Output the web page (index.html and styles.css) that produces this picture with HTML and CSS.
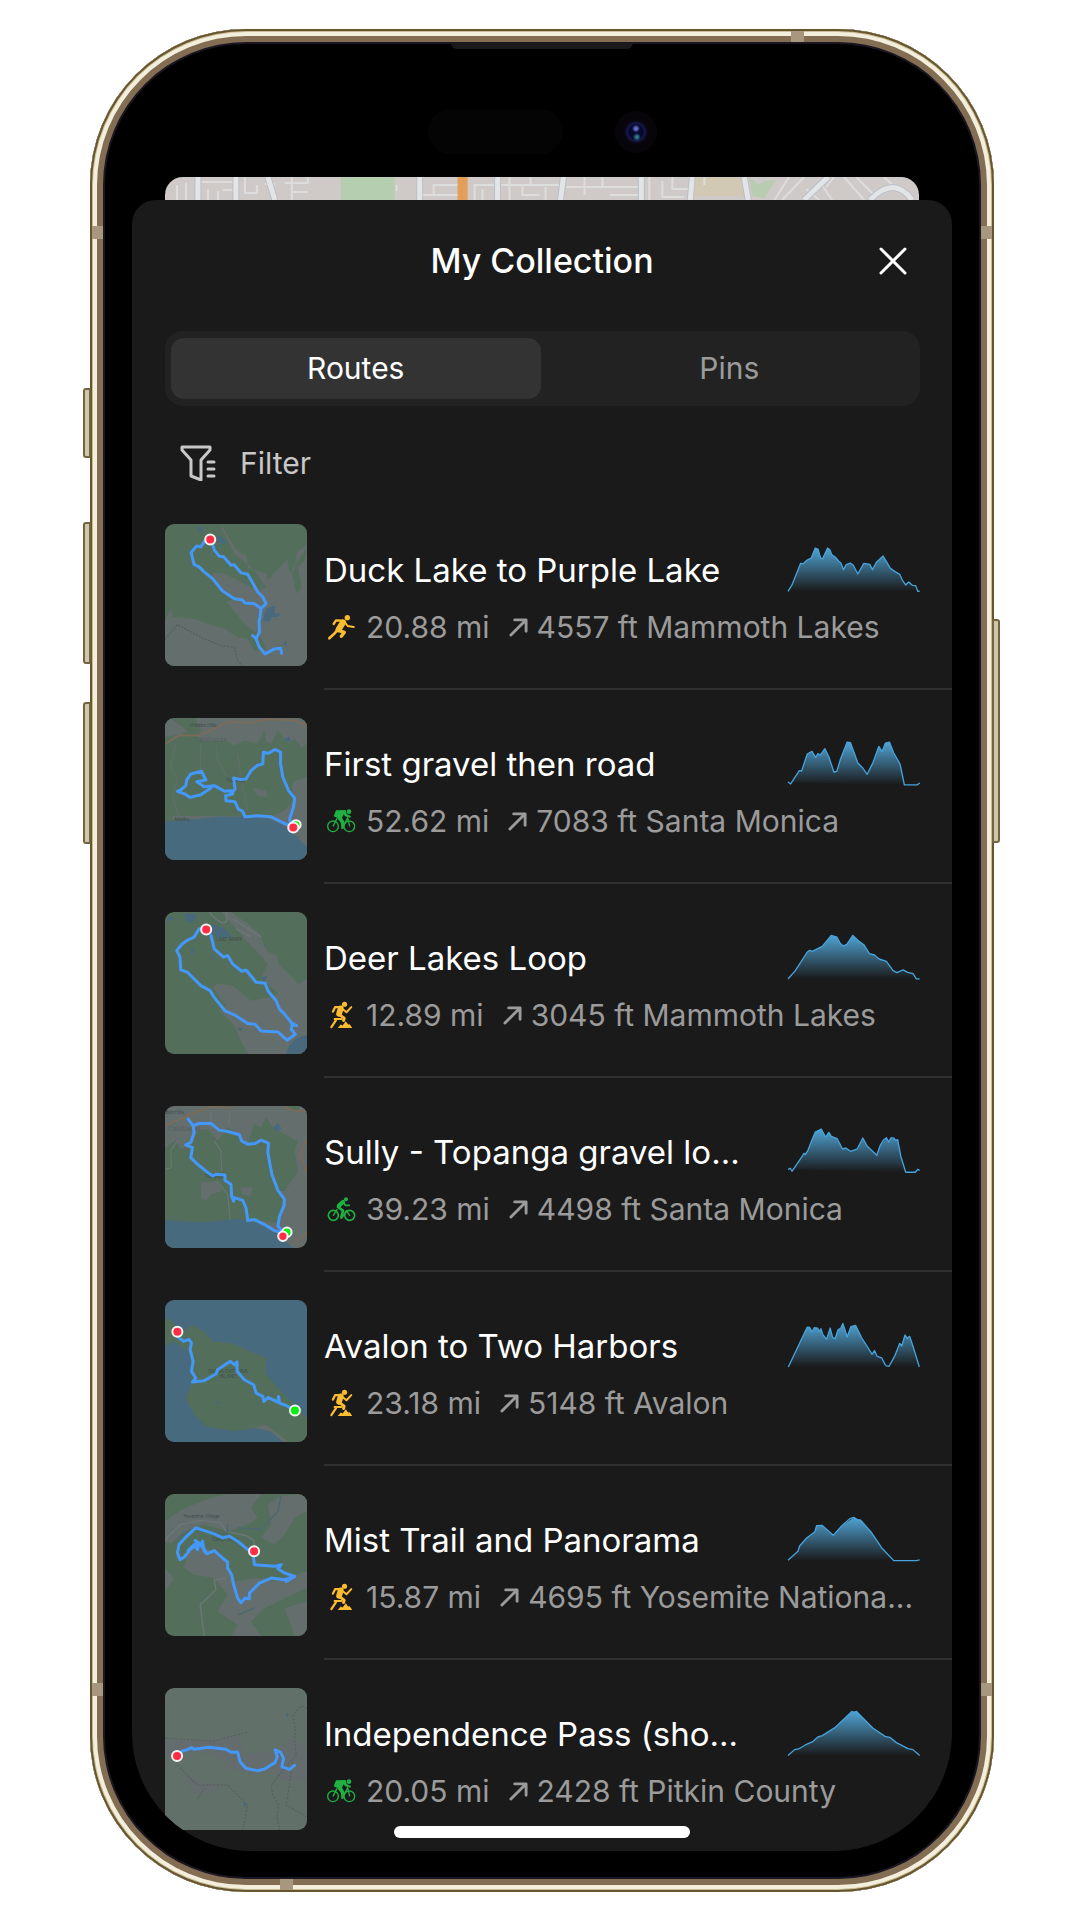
FILE: index.html
```html
<!DOCTYPE html>
<html lang="en">
  <head>
    <meta charset="UTF-8" />
    <meta name="viewport" content="width=device-width, initial-scale=1.0" />
    <title>My Collection</title>
    <link rel="stylesheet" href="styles.css">
  </head>
  <body>

    <!-- shared icons -->
    <svg class="sprite" aria-hidden="true">
      <defs>
        <linearGradient id="fade" x1="0" y1="0" x2="0" y2="1">
          <stop offset="0" stop-color="#4fa3d4" />
          <stop offset="1" stop-color="#1a1a1a" />
        </linearGradient>
      </defs>

      <symbol id="run" viewBox="527 580 90 84">
        <circle cx="591" cy="594" r="8" fill="currentColor" />
        <g fill="none" stroke="currentColor" stroke-linecap="round" stroke-linejoin="round">
          <path d="M576 603L557 602L550 613" stroke-width="7" />
          <path d="M578 608L565 629" stroke-width="18" />
          <path d="M582 606L592 619L610 622" stroke-width="6" />
          <path d="M567 633L582 638L573 650" stroke-width="10" />
          <path d="M561 630L554 640L537 656" stroke-width="8" />
        </g>
      </symbol>

      <symbol id="trail" viewBox="527 303 90 87">
        <circle cx="583" cy="313" r="8" fill="currentColor" />
        <g fill="none" stroke="currentColor" stroke-linecap="round" stroke-linejoin="round">
          <path d="M570 322L554 322L547 336" stroke-width="7" />
          <path d="M571 326L566 343" stroke-width="18" />
          <path d="M575 326L589 338L604 322" stroke-width="6" />
          <path d="M568 346L582 356L580 364" stroke-width="9" />
          <path d="M552 359H574" stroke-width="6" />
          <path d="M556 363L542 384" stroke-width="7" />
        </g>
        <path d="M562 387L571 376L577 379L587 366L594 376L599 375L607 387Z" fill="currentColor" />
      </symbol>

      <symbol id="road-bike" viewBox="527 324 90 76">
        <circle cx="596" cy="334" r="7" fill="currentColor" />
        <path d="M557 330L586 329L589 341L602 347L600 352L584 348L580 342L575 352L583 366L579 386L573 386L572 369L560 352L550 348Z" fill="currentColor" />
        <g fill="none" stroke="currentColor" stroke-width="4">
          <circle cx="548" cy="378" r="16" />
          <circle cx="597" cy="378" r="16" />
          <path d="M548 378L560 354M576 384L592 352L598 378" />
        </g>
      </symbol>

      <symbol id="gravel-bike" viewBox="527 317 90 78">
        <circle cx="587" cy="327" r="6" fill="currentColor" />
        <g fill="none" stroke="currentColor" stroke-linecap="round" stroke-linejoin="round">
          <circle cx="549" cy="375" r="15" stroke-width="5" />
          <circle cx="598" cy="375" r="15" stroke-width="5" />
          <path d="M578 335L566 346" stroke-width="13" />
          <path d="M579 336L585 345H597" stroke-width="5" />
          <path d="M563 350L578 361L573 382" stroke-width="8" />
          <path d="M549 375L560 358M578 378L588 361L598 375" stroke-width="4" />
        </g>
      </symbol>

      <symbol id="up" viewBox="0 0 20 20">
        <path d="M2 18L17 3M6 2H18V14" fill="none" stroke="currentColor" stroke-width="3" stroke-linecap="round" stroke-linejoin="round" />
      </symbol>
    </svg>

    <div class="phone">
      <span class="key key-action"></span>
      <span class="key key-up"></span>
      <span class="key key-down"></span>
      <span class="key key-power"></span>
      <span class="band band-top"></span>
      <span class="band band-bottom"></span>
      <span class="band band-side band-left band-high"></span>
      <span class="band band-side band-left band-low"></span>
      <span class="band band-side band-right band-high"></span>
      <span class="band band-side band-right band-low"></span>
      <span class="speaker"></span>

      <div class="island">
        <span class="sensor"></span>
        <span class="camera"></span>
      </div>

      <div class="screen">
        <svg class="backdrop" viewBox="0 0 755 23" preserveAspectRatio="none" aria-hidden="true">
          <rect width="755" height="23" fill="#cfcac8" />
          <rect x="176" width="54" height="23" fill="#b5ceaf" />
          <path d="M530 0H578L581 19H530Z" fill="#d2c9b4" />
          <path d="M585 0L594 7L600 4L612 3L600 21L588 19Z" fill="#b8ccb2" />
          <g fill="none" stroke="#dedddd" stroke-width="2">
            <path d="M12 8V23M21 6V23M35 5H72M43 12V23M53 14V23M58 13H72M80 0V16H92V8M100 7H110M120 6H143V0M128 15H143M127 0V23M232 8V14M258 18H295M269 18V8H294M310 23V8H330M318 12V23M336 8H395M345 0V23M358 8V18H375M366 0V8M381 23V10M402 10H475M420 0V18M438 0V10M445 18H475M485 0V23M498 4V20H520M508 0V12H525M540 0V8M625 0L610 23M640 0L618 23M655 4L668 23M670 0L662 10M680 0L700 23M692 0L712 20M720 0L735 14M642 12L655 23" />
          </g>
          <g fill="none" stroke="#b9bfc9" stroke-width="7">
            <path d="M33 0V23M71 0V23M103 0L110 23M255 0V23M333 0V23M399 0L396 23M477 0V23M528 0L526 23M580 0L584 23M664 0L640 23M706 23Q730 -2 748 23" />
          </g>
          <g fill="none" stroke="#e3e4e5" stroke-width="5">
            <path d="M33 0V23M71 0V23M103 0L110 23M255 0V23M333 0V23M399 0L396 23M477 0V23M528 0L526 23M580 0L584 23M664 0L640 23M706 23Q730 -2 748 23" />
          </g>
          <rect x="293" width="10" height="23" fill="#e39e58" />
        </svg>

        <main class="sheet">
          <header class="sheet-header">
            <h1>My Collection</h1>
            <button type="button" class="close" aria-label="Close">
              <svg viewBox="0 0 28 28"><path d="M2 2L26 26M26 2L2 26" fill="none" stroke="#fff" stroke-width="3" stroke-linecap="round" /></svg>
            </button>
          </header>

          <div class="tabs" role="tablist">
            <button type="button" class="tab active" role="tab" aria-selected="true">Routes</button>
            <button type="button" class="tab" role="tab" aria-selected="false">Pins</button>
          </div>

          <button type="button" class="filter">
            <svg viewBox="0 0 36 36" fill="none" stroke="currentColor" stroke-width="3" stroke-linejoin="round" stroke-linecap="round">
              <path d="M2 2H30V5L21 15V35L11 31V15L2 5Z" />
              <path d="M28 17H34M28 24H34M28 31H34" />
            </svg>
            Filter
          </button>

          <ul class="routes">
            <li class="route">
              <svg class="thumb" viewBox="43 312 424 424" aria-hidden="true">
                <rect x="43" y="312" width="424" height="424" fill="#536f5b" />
                <path d="M210 312L232 350L262 395L285 405L292 445L345 460L350 480L395 430L408 420L415 455L430 450L436 400L467 370V736H43V600L60 565L66 590L130 595L170 610L220 625L262 650L290 655L310 690L345 690L330 650L280 610L228 545L250 535L200 500L180 470L190 458L220 460L300 500L330 510L345 500L300 440L250 400L225 350L212 330ZM360 550L395 535L390 560L365 570ZM420 450L436 520L450 500L440 440L460 420L467 380Z" fill="#636e6d" />
                <path d="M335 600L345 565L372 555L370 578L388 580L380 590L362 590L355 605ZM138 330L150 315L158 340ZM200 345L225 360L220 375L200 365ZM395 670L405 660V680Z" fill="#48697c" />
                <path d="M43 655L80 612L150 650L210 675L250 680L260 720L275 736" fill="none" stroke="#545d58" stroke-width="3" stroke-dasharray="6 4" />
                <path class="track" d="M178 358L160 365L150 380L137 378L121 397L130 433L145 440L160 455L185 475L215 512L250 535L272 538L282 548L310 550L330 564L327 590L324 600L325 635L315 655L325 680L342 700L370 685L388 683L391 698M316 655L305 645M330 564L345 550L335 530L320 515L290 462L270 458L250 434L240 435L218 410L205 408L190 390L185 370" />
                <circle class="end" cx="178" cy="358" r="15" />
              </svg>
              <div class="info">
                <div class="top">
                  <h2>Duck Lake to Purple Lake</h2>
                  <svg class="chart" viewBox="51 84 400 135" aria-hidden="true">
                    <path fill="url(#fade)" d="M54 217L66 198L92 133L100 134L110 124L124 117L136 87L144 90L152 117L158 119L173 87L180 92L186 107L196 114L206 126L213 132L221 152L229 137L241 132L250 138L264 165L282 133L300 136L308 152L320 130L340 111L350 128L362 148L376 158L390 166L398 184L408 198L417 189L428 199L438 200L446 217Z" />
                    <path class="line" d="M54 217L66 198L92 133L100 134L110 124L124 117L136 87L144 90L152 117L158 119L173 87L180 92L186 107L196 114L206 126L213 132L221 152L229 137L241 132L250 138L264 165L282 133L300 136L308 152L320 130L340 111L350 128L362 148L376 158L390 166L398 184L408 198L417 189L428 199L438 200L444 217H450" />
                  </svg>
                </div>
                <p class="meta">
                  <svg class="sport foot"><use href="#run" /></svg>
                  <span class="distance">20.88 mi</span>
                  <svg class="up"><use href="#up" /></svg>
                  <span>4557 ft Mammoth Lakes</span>
                </p>
              </div>
            </li>

            <li class="route">
              <svg class="thumb" viewBox="43 53 424 424" aria-hidden="true">
                <rect x="43" y="53" width="424" height="424" fill="#536f5b" />
                <path d="M135 53H467V130L450 140L430 115L410 130L380 90L360 130L345 125L340 90L320 130L280 120L250 135L225 120L160 125L140 110L150 90ZM430 240L467 230V477L400 400L270 350L340 355L400 330L435 290L420 260ZM305 262L345 270L350 290L320 285ZM70 345L270 345V355H60Z" fill="#636e6d" />
                <path d="M43 53H60L110 90L100 100L43 110Z" fill="#636e6d" />
                <path d="M43 363L130 355L200 348L275 347L350 352L400 375L440 410L467 440V477H43Z" fill="#486a7e" />
                <path d="M400 115L412 108L420 122L405 125Z" fill="#48697c" />
                <path d="M43 130L85 105L140 105L180 90L235 63L300 68L340 57L430 60L467 75" fill="none" stroke="#7d6b58" stroke-width="5" />
                <path d="M75 130L60 200L80 240L65 285L85 350M150 130L148 205M195 135L200 180L230 230M260 160L270 230L290 330" fill="none" stroke="#636e6d" stroke-width="3" />
                <text x="118" y="81" class="place">Hidden Hills</text>
                <text x="130" y="126" class="place faint">Calabasas</text>
                <text x="226" y="244" class="place">Topanga</text>
                <text x="72" y="361" class="place">Malibu</text>
                <path class="track" d="M426 375L404 370L360 348L320 345L282 348L275 332L262 325L252 303L225 300L224 285L245 280L240 270L222 272L190 255L160 258L138 243L165 238L152 212L120 220L108 238L105 255L90 268L80 272L102 280L118 290L150 282L180 262M240 280L252 265L248 232L268 237L285 235L300 210L318 195L335 190L337 155L352 158L372 147L388 155L388 190L395 230L412 270L430 292L427 318L415 355L420 375" />
                <circle class="start" cx="434" cy="372" r="14" />
                <circle class="end" cx="426" cy="380" r="15" />
              </svg>
              <div class="info">
                <div class="top">
                  <h2>First gravel then road</h2>
                  <svg class="chart" viewBox="51 666 400 135" aria-hidden="true">
                    <path fill="url(#fade)" d="M54 789L62 795L88 755L95 756L112 705L126 697L137 715L144 704L151 708L165 689L177 714L192 759L201 757L212 720L232 669L242 671L264 732L292 766L310 730L327 682L337 698L347 672L359 669L372 702L391 735L404 798Z" />
                    <path class="line" d="M54 789L62 795L88 755L95 756L112 705L126 697L137 715L144 704L151 708L165 689L177 714L192 759L201 757L212 720L232 669L242 671L264 732L278 746L292 766L310 730L327 682L337 698L347 672L359 669L372 702L391 735L404 798H442L450 792" />
                  </svg>
                </div>
                <p class="meta">
                  <svg class="sport bike"><use href="#road-bike" /></svg>
                  <span class="distance">52.62 mi</span>
                  <svg class="up"><use href="#up" /></svg>
                  <span>7083 ft Santa Monica</span>
                </p>
              </div>
            </li>

            <li class="route">
              <svg class="thumb" viewBox="43 35 424 424" aria-hidden="true">
                <rect x="43" y="35" width="424" height="424" fill="#536f5b" />
                <path d="M210 35H240L290 70L325 100L345 150L375 165L385 195L410 215L440 250L467 235V459H290L265 410L250 375L205 330L225 315L185 260L200 248L245 255L300 300L350 290L380 280L330 230L350 190L310 145L290 125L250 80Z" fill="#636e6d" />
                <path d="M405 459Q415 410 467 402V459ZM100 40L138 42L125 70L105 60ZM185 70L220 85L245 110L200 112L180 95ZM50 50H72L55 65ZM120 145L132 142L125 165ZM180 155L190 178L182 175ZM258 382L278 380L268 392ZM330 230L350 225L340 245Z" fill="#48697c" />
                <path d="M175 35Q195 60 215 68Q235 65 225 35M245 55L330 110M255 85L300 110" fill="none" stroke="#6d7779" stroke-width="4" />
                <text x="194" y="121" class="place">LAKE MARY</text>
                <path class="track" d="M166 87L145 85L130 110L112 118L95 130L78 150L88 170L90 208L110 215L150 255L178 270L190 290L222 330L250 342L290 368L312 370L330 390L380 393L408 418L432 400L420 385L422 372L436 374L420 365L400 340L385 325L375 300L350 270L342 248L315 245L285 208L272 212L245 190L230 165L218 170L190 145L180 105" />
                <circle class="end" cx="166" cy="87" r="15" />
              </svg>
              <div class="info">
                <div class="top">
                  <h2>Deer Lakes Loop</h2>
                  <svg class="chart" viewBox="51 1248 400 135" aria-hidden="true">
                    <path fill="url(#fade)" d="M54 1380L76 1355L112 1299L119 1294L127 1297L157 1282L184 1249L201 1254L211 1273L220 1281L231 1276L249 1249L266 1265L282 1277L299 1304L314 1308L328 1320L350 1327L370 1355L382 1361L400 1353L430 1364L440 1380Z" />
                    <path class="line" d="M54 1380L76 1355L112 1299L119 1294L127 1297L157 1282L184 1249L201 1254L211 1273L220 1281L231 1276L249 1249L266 1265L282 1277L299 1304L314 1308L328 1320L350 1327L370 1355L382 1361L400 1353L414 1360L430 1364L440 1380H450" />
                  </svg>
                </div>
                <p class="meta">
                  <svg class="sport foot"><use href="#trail" /></svg>
                  <span class="distance">12.89 mi</span>
                  <svg class="up"><use href="#up" /></svg>
                  <span>3045 ft Mammoth Lakes</span>
                </p>
              </div>
            </li>

            <li class="route">
              <svg class="thumb" viewBox="43 46 424 424" aria-hidden="true">
                <rect x="43" y="46" width="424" height="424" fill="#636e6d" />
                <path d="M43 170L75 150L90 175L125 160L140 120L170 115L200 150L230 110L260 130L290 160L310 100L330 110L345 80L365 110L400 130L440 150L430 180L440 240L400 300L380 395L290 385L230 388L160 395L43 390ZM410 46H450L440 60L415 55Z" fill="#536f5b" />
                <path d="M150 275L200 270L215 300L180 310L165 330L150 320ZM265 290L305 288L300 315L275 310ZM380 300L410 300L395 330Z" fill="#636e6d" />
                <path d="M43 387L160 393L260 383L320 395L370 420L425 470H43Z" fill="#486a7e" />
                <path d="M365 110L380 98L392 115L375 122Z" fill="#48697c" />
                <path d="M43 103L100 80L160 55L190 47L240 52M400 50L430 60L467 62M467 140L447 190L467 250M425 460L467 425" fill="none" stroke="#7d6b58" stroke-width="5" />
                <path d="M80 150L60 180L62 230L43 235M180 60V115M235 60V105M190 150L210 180L212 240M200 270L230 310L238 385" fill="none" stroke="#6d7779" stroke-width="3" />
                <text x="44" y="69" class="place">den Hills</text>
                <text x="52" y="122" class="place faint">Calabasas</text>
                <text x="162" y="262" class="place">Topanga</text>
                <path class="track" d="M395 425L370 418L340 400L310 385L290 388L285 350L275 328L245 318L248 330L242 315L240 280L222 268L222 252L195 250L185 255L165 240L138 218L120 200L125 170L105 162L120 155L130 125L127 105L112 85M127 105L145 98L180 98L205 118L230 122L265 132L272 150L290 160L312 158L330 148L352 157L350 185L362 250L380 298L400 325L398 345L385 375L380 405L400 425" />
                <circle class="start" cx="407" cy="423" r="14" />
                <circle class="end" cx="395" cy="435" r="14" />
              </svg>
              <div class="info">
                <div class="top">
                  <h2>Sully - Topanga gravel lo...</h2>
                  <svg class="chart" viewBox="51 60 400 135" aria-hidden="true">
                    <path fill="url(#fade)" d="M54 181L66 187L98 140L114 124L124 98L136 69L154 60L167 84L177 70L184 82L202 89L218 120L228 117L242 127L262 120L279 87L292 111L321 139L331 110L350 86L357 99L363 87L384 92L393 141L408 190Z" />
                    <path class="line" d="M54 181L61 178L66 187L98 140L102 133L106 137L114 124L124 98L136 69L154 60L167 84L177 70L184 82L202 89L218 120L228 117L242 127L262 120L279 87L292 111L321 139L331 110L342 92L350 86L357 99L363 87H372L378 94L384 92L393 141L408 190H437L444 181L450 184" />
                  </svg>
                </div>
                <p class="meta">
                  <svg class="sport bike"><use href="#gravel-bike" /></svg>
                  <span class="distance">39.23 mi</span>
                  <svg class="up"><use href="#up" /></svg>
                  <span>4498 ft Santa Monica</span>
                </p>
              </div>
            </li>

            <li class="route">
              <svg class="thumb" viewBox="43 57 424 424" aria-hidden="true">
                <rect x="43" y="57" width="424" height="424" fill="#486a7e" />
                <path d="M43 112L68 122L80 150L105 148L120 130L160 152L185 180L250 188L290 208L345 230L343 275L380 320L430 370L467 410V481H405L370 450L330 437L250 448L170 437L130 400L105 350L122 310L118 220L100 200L65 180L43 195Z" fill="#536f5b" />
                <path d="M305 437L345 430L380 455L410 481H395L360 450Z" fill="#636e6d" />
                <path d="M190 358L208 364L200 370Z" fill="#48697c" />
                <text x="172" y="274" class="place">SANTA CATALINA</text>
                <text x="206" y="289" class="place">ISLAND</text>
                <path class="track" d="M80 152L85 170L98 180L115 175L122 185L118 205L127 240L122 270L135 290L125 302L160 298L195 278L200 265L238 240L250 250L258 242L258 270L280 295L308 310L315 335L335 345L338 360L350 348L380 362L382 345L385 365L405 372L430 386" />
                <circle class="end" cx="80" cy="152" r="15" />
                <circle class="start" cx="431" cy="387" r="15" />
              </svg>
              <div class="info">
                <div class="top">
                  <h2>Avalon to Two Harbors</h2>
                  <svg class="chart" viewBox="51 641 400 135" aria-hidden="true">
                    <path fill="url(#fade)" d="M55 773L112 653L119 654L126 668L133 655L143 656L148 668L153 658L159 676L170 690L181 656L188 684L196 688L204 662L213 656L219 642L232 683L243 652L257 648L276 686L307 735L314 724L322 741L336 746L346 766L358 771L376 738L390 702L396 710L406 677L413 687L420 681L431 714L449 773Z" />
                    <path class="line" d="M55 773L112 653L119 654L126 668L133 655L143 656L148 668L153 658L159 676L170 690L181 656L188 684L196 688L204 662L213 656L219 642L232 683L243 652L257 648L276 686L307 735L314 724L322 741L336 746L346 766L350 770L358 771L376 738L390 702L396 710L406 677L413 687L420 681L431 714L449 773" />
                  </svg>
                </div>
                <p class="meta">
                  <svg class="sport foot"><use href="#trail" /></svg>
                  <span class="distance">23.18 mi</span>
                  <svg class="up"><use href="#up" /></svg>
                  <span>5148 ft Avalon</span>
                </p>
              </div>
            </li>

            <li class="route">
              <svg class="thumb" viewBox="43 39 424 424" aria-hidden="true">
                <rect x="43" y="39" width="424" height="424" fill="#536f5b" />
                <path d="M43 120L95 85L130 70L180 50L230 39H330L300 80L320 110L290 130L230 150L160 130L100 150L60 190L43 180ZM350 70L390 45L467 39V90L430 110L400 160L370 190L330 170L360 130ZM110 210L160 195L220 230L250 300L320 290L360 300L467 270V320L400 350L340 380L300 420L330 463H240L260 430L200 390L230 340L190 290L130 280L100 260ZM43 260L70 290L43 330ZM400 380L467 360V463H430Z" fill="#636e6d" />
                <path d="M43 175L90 130L150 118L210 125L225 150L290 165L310 180V210M160 463L148 370L195 325L190 295L225 290" fill="none" stroke="#6d7779" stroke-width="4" />
                <path d="M85 170L130 145L230 160V130M260 140L330 145L380 90L390 45M260 400L310 380" fill="none" stroke="#4c6873" stroke-width="4" />
                <text x="98" y="111" class="place">Yosemite Village</text>
                <text x="183" y="178" class="place">Camp Curry</text>
                <path class="track" d="M309 210L290 205L260 180L235 165L215 170L190 158L135 140L105 168L85 190L80 215L88 235L100 228L118 205L140 190L133 178L150 190L155 180L160 210L168 218L190 208L215 230L230 242L230 260L242 280L248 310L260 350L270 364L282 350L295 352L295 335L310 320L325 305L360 290L400 295L430 285L405 300M430 285L400 275L380 262L390 250L370 255L310 250L306 220M112 208L130 190L140 205L145 185L165 212" />
                <circle class="end" cx="309" cy="210" r="15" />
              </svg>
              <div class="info">
                <div class="top">
                  <h2>Mist Trail and Panorama</h2>
                  <svg class="chart" viewBox="51 1222 400 135" aria-hidden="true">
                    <path fill="url(#fade)" d="M54 1352L84 1325L89 1309L110 1285L135 1266L140 1248L157 1247L190 1277L216 1248L252 1223L272 1231L303 1266L336 1315L372 1353Z" />
                    <path class="line" d="M54 1352L84 1325L89 1309L110 1285L135 1266L140 1248L157 1247L190 1277L216 1248L240 1227L252 1223L262 1230L272 1231L303 1266L336 1315L372 1353H440L450 1351" />
                  </svg>
                </div>
                <p class="meta">
                  <svg class="sport foot"><use href="#trail" /></svg>
                  <span class="distance">15.87 mi</span>
                  <svg class="up"><use href="#up" /></svg>
                  <span>4695 ft Yosemite Nationa...</span>
                </p>
              </div>
            </li>

            <li class="route">
              <svg class="thumb" viewBox="283 50 424 424" aria-hidden="true">
                <rect x="283" y="50" width="424" height="424" fill="#62706a" />
                <path d="M283 200L430 208L500 185L520 250L600 240L660 200L707 230V330L640 325L600 300L540 305L480 290L440 250L330 235L283 260ZM340 310L400 335L460 340L430 360L370 365Z" fill="#646c6e" />
                <path d="M642 128L652 126L650 138ZM515 392L527 395L522 408Z" fill="#48697c" />
                <path d="M707 110L690 103L665 130L672 170L670 210L675 250L640 290L600 340L605 370L622 400L618 440L625 474M283 200L430 208L528 182M320 280L380 340L470 340L530 400L515 474M660 300L645 400L707 435M380 380L400 350" fill="none" stroke="#555f58" stroke-width="3" stroke-dasharray="6 5" />
                <path class="track" d="M319 253L335 238L350 234L362 228L370 233L415 227L465 233L480 242L500 242L507 270L525 290L560 297L580 292L612 272L618 255L612 235L628 242L637 260L632 285L655 293L670 281" />
                <circle class="end" cx="319" cy="253" r="15" />
              </svg>
              <div class="info">
                <div class="top">
                  <h2>Independence Pass (sho...</h2>
                  <svg class="chart" viewBox="681 182 400 135" aria-hidden="true">
                    <path fill="url(#fade)" d="M684 316L704 298L716 296L757 275L774 260L787 256L825 232L876 183L890 183L939 233L976 258L990 261L1010 277L1045 295L1060 298L1080 316Z" />
                    <path class="line" d="M684 316L704 298L716 296L736 284L757 275L774 260L787 256L825 232L876 183L882 187L890 183L939 233L976 258L990 261L1010 277L1045 295L1060 298L1080 316" />
                  </svg>
                </div>
                <p class="meta">
                  <svg class="sport bike"><use href="#road-bike" /></svg>
                  <span class="distance">20.05 mi</span>
                  <svg class="up"><use href="#up" /></svg>
                  <span>2428 ft Pitkin County</span>
                </p>
              </div>
            </li>
          </ul>

          <span class="home-bar"></span>
        </main>
      </div>
    </div>

  </body>
</html>
```
FILE: styles.css
```css
* {
  box-sizing: border-box;
}

body {
  margin: 0;
  padding: 29px 16px 28px 20px;
  background: #fff;
  color: #fff;
  font-family: Inter, "Liberation Sans", sans-serif;
}

button {
  border: none;
  background: none;
  color: inherit;
  font-family: inherit;
  cursor: pointer;
}

.sprite {
  position: absolute;
  width: 0;
  height: 0;
}

/* phone body */
.phone {
  position: relative;
  width: 100%;
  max-width: 904px;
  margin: 0 auto;
  padding: 0 42px 41px;
  border-radius: 156px;
  background: #000;
  box-shadow:
    inset 0 0 0 2px #66552f,
    inset 0 0 0 3px #c9bd94,
    inset 0 0 0 7px #f4efdc,
    inset 0 0 0 13px #836e54,
    inset 0 0 0 15px #1a1722;
}

.key {
  position: absolute;
  left: -7px;
  width: 8px;
  border: 2px solid #74633f;
  border-radius: 3px 0 0 3px;
  background: #cfc6ae;
}

.key-action {
  top: 359px;
  height: 70px;
}

.key-up {
  top: 493px;
  height: 142px;
}

.key-down {
  top: 673px;
  height: 142px;
}

.key-power {
  left: auto;
  right: -6px;
  top: 590px;
  height: 224px;
  border-radius: 0 3px 3px 0;
}

.band {
  position: absolute;
  width: 13px;
  height: 11px;
  background: #a8977f;
}

.band-top {
  top: 2px;
  right: 190px;
}

.band-bottom {
  bottom: 2px;
  left: 190px;
}

.band-side {
  width: 11px;
  height: 13px;
}

.band-left {
  left: 2px;
}

.band-right {
  right: 2px;
}

.band-high {
  top: 197px;
}

.band-low {
  bottom: 196px;
}

.speaker {
  position: absolute;
  top: 14px;
  left: 50%;
  width: 182px;
  height: 6px;
  margin-left: -91px;
  border-radius: 0 0 6px 6px;
  background: #1a1a1b;
}

.island {
  display: flex;
  justify-content: center;
  align-items: center;
  gap: 52px;
  height: 148px;
  padding-top: 57px;
}

.sensor {
  width: 135px;
  height: 45px;
  border-radius: 23px;
  background: #040404;
}

.camera {
  width: 42px;
  height: 42px;
  border-radius: 50%;
  background: radial-gradient(circle at 50% 42%, #6c70c8 0 1px, transparent 4px),
    radial-gradient(circle at 52% 62%, #2b8088 0 1px, transparent 4px),
    radial-gradient(circle, #070830 0 7px, #17194c 9px, #0e0e2c 10px, #08050a 12px);
}

/* screen */
.backdrop {
  display: block;
  width: calc(100% - 66px);
  height: 23px;
  margin: 0 auto;
  border-radius: 18px 18px 0 0;
}

.sheet {
  position: relative;
  overflow: hidden;
  border-radius: 24px 24px 118px 118px;
  background: #1a1a1a;
}

.sheet-header {
  display: grid;
  grid-template-columns: 1fr auto 1fr;
  align-items: center;
  padding: 39px 45px 48px;
}

.sheet-header h1 {
  grid-column: 2;
  margin: 0;
  font-size: 34px;
  line-height: 44px;
  font-weight: 500;
}

.close {
  justify-self: end;
  width: 28px;
  height: 28px;
  padding: 0;
}

.close svg {
  display: block;
}

.tabs {
  display: flex;
  gap: 4px;
  margin: 0 32px 0 33px;
  padding: 7px 6px;
  border-radius: 18px;
  background: #222;
}

.tab {
  flex: 1;
  padding: 0;
  border-radius: 13px;
  color: #9b9b9b;
  font-size: 30px;
  line-height: 61px;
}

.tab.active {
  background: #333;
  color: #fff;
}

.filter {
  display: flex;
  align-items: center;
  gap: 24px;
  padding: 37px 48px 13px;
  color: #c8c8c8;
  font-size: 30px;
  line-height: 40px;
}

.filter svg {
  width: 36px;
  height: 36px;
}

/* route list */
.routes {
  margin: 0;
  padding: 0;
  list-style: none;
}

.route {
  display: flex;
  gap: 17px;
  padding-left: 33px;
}

.thumb {
  flex: none;
  width: 142px;
  height: 142px;
  margin: 28px 0 24px;
  border-radius: 9px;
}

.route:last-child .thumb {
  margin-bottom: 21px;
}

.track {
  fill: none;
  stroke: #4398f9;
  stroke-width: 9px;
  stroke-linejoin: round;
  stroke-linecap: round;
}

.start,
.end {
  fill: #05f00c;
  stroke: #f3f3f3;
  stroke-width: 6px;
}

.end {
  fill: #ff2d46;
}

.place {
  fill: #414a4c;
  font-size: 14px;
}

.faint {
  fill: #57615f;
  font-size: 20px;
}

.info {
  flex: 1;
  min-width: 0;
  padding: 51px 32px 0 0;
  border-bottom: 2px solid #303030;
}

.route:last-child .info {
  border-bottom: none;
}

.top {
  display: flex;
  justify-content: space-between;
  align-items: center;
}

.top h2 {
  margin: 0;
  font-size: 33px;
  line-height: 44px;
  font-weight: 400;
  white-space: nowrap;
}

.chart {
  flex: none;
  width: 133px;
  height: 45px;
  overflow: visible;
}

.line {
  fill: none;
  stroke: #46a3dc;
  stroke-width: 4px;
  stroke-linejoin: round;
}

.meta {
  display: flex;
  align-items: center;
  margin: 15px 0 0;
  color: #9b9b9b;
  font-size: 30px;
  line-height: 40px;
  white-space: nowrap;
}

.sport {
  width: 30px;
  height: 28px;
  margin: 0 10px 0 2px;
}

.foot {
  color: #fbbc2f;
}

.bike {
  color: #1fb141;
}

.up {
  width: 19px;
  height: 19px;
  margin: 0 9px 0 19px;
}

.home-bar {
  position: absolute;
  left: 50%;
  bottom: 13px;
  width: 296px;
  height: 12px;
  margin-left: -148px;
  border-radius: 6px;
  background: #fff;
}
```
